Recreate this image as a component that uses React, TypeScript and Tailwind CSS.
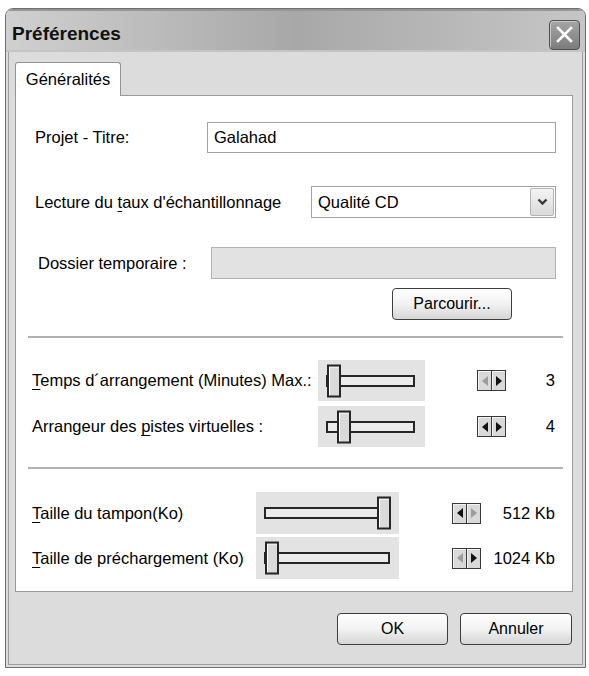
const ARROW_ON = "#111111";
const ARROW_OFF = "#9c9c9c";

function Arrow({ dir, on }: { dir: "left" | "right"; on: boolean }) {
  const points = dir === "left" ? "6,0 6,10 0,5" : "0,0 0,10 6,5";
  return (
    <svg width="6" height="10" viewBox="0 0 6 10">
      <polygon points={points} fill={on ? ARROW_ON : ARROW_OFF} />
    </svg>
  );
}

function Spinner({ left, right }: { left: boolean; right: boolean }) {
  return (
    <div className="flex h-[21px] w-[29px] shrink-0 border border-[#383838] bg-[#cfcfcf]">
      <div className="flex flex-1 items-center justify-center border-r border-[#383838] bg-[#d9d9d9] shadow-[inset_1px_1px_0_#f4f4f4]">
        <Arrow dir="left" on={left} />
      </div>
      <div className="flex flex-1 items-center justify-center bg-[#d9d9d9] shadow-[inset_1px_1px_0_#f4f4f4]">
        <Arrow dir="right" on={right} />
      </div>
    </div>
  );
}

function Slider({ box, thumb }: { box: string; thumb: string }) {
  return (
    <div className={`relative flex h-full shrink-0 items-center bg-[#e3e3e3] ${box}`}>
      <div className="h-[12px] flex-1 border-2 border-[#262626] bg-[#ebebeb]" />
      {/* thumb sits over the track */}
      <div
        className={`absolute top-1/2 h-[33px] w-[14px] -translate-y-1/2 border-2 border-[#262626] bg-[#dadada] shadow-[inset_1px_1px_0_#ffffff] ${thumb}`}
      />
    </div>
  );
}

function XpButton({ children, className }: { children: React.ReactNode; className: string }) {
  return (
    <button
      className={`flex h-[32px] items-center justify-center rounded-[4px] border border-[#3e3e3e] bg-gradient-to-b from-[#ffffff] via-[#f2f2f2] to-[#d6d6d6] text-[16px] text-black ${className}`}
    >
      {children}
    </button>
  );
}

export default function App() {
  return (
    <div className="h-[676px] w-[589px] bg-white pt-[8px] pl-[5px] font-['Liberation_Sans',Arial,sans-serif] text-black">
      <div className="flex h-[660px] w-[581px] flex-col overflow-hidden rounded-t-[8px] border border-[#6e6e6e] bg-[#dcdcdc]">
        {/* Title bar */}
        <div className="flex h-[43px] shrink-0 items-center justify-between bg-gradient-to-r from-[#d0d0d0] via-[#a8a8a8] to-[#c6c6c6] pl-[6px] pr-[5px] shadow-[inset_0_2px_0_#969696,inset_0_-2px_0_#c4c4c4]">
          <span className="mt-[8px] text-[19px] font-bold text-[#111]">Préférences</span>
          <div className="mt-[8px] flex h-[30px] w-[31px] items-center justify-center rounded-[4px] border border-[#4f4f4f] bg-gradient-to-b from-[#a6a6a6] to-[#7c7c7c] shadow-[inset_1px_1px_0_#c8c8c8]">
            <svg width="17" height="17" viewBox="0 0 17 17">
              <path d="M2 2 L15 15 M15 2 L2 15" stroke="#ffffff" strokeWidth="2.6" strokeLinecap="square" />
            </svg>
          </div>
        </div>

        {/* Body */}
        <div className="mx-[2px] mb-[2px] flex flex-1 flex-col border-x border-b border-[#9e9e9e] pt-[10px] pl-[6px] pr-[9px]">
          {/* Tab */}
          <div className="relative z-10 -mb-px flex h-[34px] w-[106px] items-center justify-center rounded-t-[3px] border border-b-0 border-[#939393] bg-white text-[16.5px]">
            Généralités
          </div>

          {/* Panel */}
          <div className="flex h-[497px] flex-col border border-[#9a9a9a] bg-white text-[16.5px]">
            <div className="mt-[26px] flex h-[31px] items-center pl-[19px] pr-[16px]">
              <span className="w-[172px] shrink-0">Projet - Titre:</span>
              <div className="flex h-full flex-1 items-center border border-[#a3a3a3] pl-[6px]">Galahad</div>
            </div>

            <div className="mt-[33px] flex h-[32px] items-center pl-[19px] pr-[16px]">
              <span className="w-[276px] shrink-0">
                Lecture du <span className="underline underline-offset-[3px]">t</span>aux d'échantillonnage
              </span>
              <div className="flex h-full flex-1 items-center border border-[#a3a3a3] pl-[6px]">
                <span className="flex-1">Qualité CD</span>
                <div className="mr-px flex h-[28px] w-[24px] items-center justify-center rounded-[2px] border border-[#b4b4b4] bg-gradient-to-b from-[#f4f4f4] to-[#dadada]">
                  <svg width="11" height="8" viewBox="0 0 11 8">
                    <path d="M1.5 1.5 L5.5 5.5 L9.5 1.5" fill="none" stroke="#3a3a3a" strokeWidth="2.4" />
                  </svg>
                </div>
              </div>
            </div>

            <div className="mt-[29px] flex h-[32px] items-center pl-[19px] pr-[16px]">
              <span className="ml-[3px] w-[173px] shrink-0">Dossier temporaire :</span>
              <div className="h-full flex-1 border border-[#b3b3b3] bg-[#e2e2e2]" />
            </div>

            <div className="mt-[9px] flex pr-[60px]">
              <XpButton className="ml-auto w-[120px]">Parcourir...</XpButton>
            </div>

            <div className="mt-[16px] mr-[9px] ml-[12px] h-[2px] bg-[#b1b1b1]" />

            <div className="mt-[22px] flex h-[41px] items-center pl-[16px] pr-[17px]">
              <span className="w-[286px] shrink-0">
                <span className="underline underline-offset-[3px]">T</span>emps d´arrangement (Minutes) Max.:
              </span>
              <Slider box="w-[107px] pl-[8px] pr-[10px]" thumb="left-[9px]" />
              <div className="ml-[52px]">
                <Spinner left={false} right={true} />
              </div>
              <span className="flex-1 text-right">3</span>
            </div>

            <div className="mt-[5px] flex h-[41px] items-center pl-[16px] pr-[17px]">
              <span className="w-[286px] shrink-0">
                Arrangeur des <span className="underline underline-offset-[3px]">p</span>istes virtuelles :
              </span>
              <Slider box="w-[107px] pl-[8px] pr-[10px]" thumb="left-[19px]" />
              <div className="ml-[52px]">
                <Spinner left={true} right={true} />
              </div>
              <span className="flex-1 text-right">4</span>
            </div>

            <div className="mt-[20px] mr-[9px] ml-[12px] h-[2px] bg-[#b1b1b1]" />

            <div className="mt-[23px] flex h-[42px] items-center pl-[16px] pr-[17px]">
              <span className="w-[224px] shrink-0">
                <span className="underline underline-offset-[3px]">T</span>aille du tampon(Ko)
              </span>
              <Slider box="w-[143px] pl-[8px] pr-[9px]" thumb="left-[121px]" />
              <div className="ml-[53px]">
                <Spinner left={true} right={false} />
              </div>
              <span className="flex-1 text-right">512 Kb</span>
            </div>

            <div className="mt-[3px] flex h-[42px] items-center pl-[16px] pr-[17px]">
              <span className="w-[224px] shrink-0">
                <span className="underline underline-offset-[3px]">T</span>aille de préchargement (Ko)
              </span>
              <Slider box="w-[143px] pl-[8px] pr-[9px]" thumb="left-[9px]" />
              <div className="ml-[53px]">
                <Spinner left={false} right={true} />
              </div>
              <span className="flex-1 text-right">1024 Kb</span>
            </div>
          </div>

          {/* Dialog buttons */}
          <div className="mt-[21px] flex justify-end gap-[12px] pr-px">
            <XpButton className="w-[111px]">OK</XpButton>
            <XpButton className="w-[112px]">Annuler</XpButton>
          </div>
        </div>
      </div>
    </div>
  );
}
